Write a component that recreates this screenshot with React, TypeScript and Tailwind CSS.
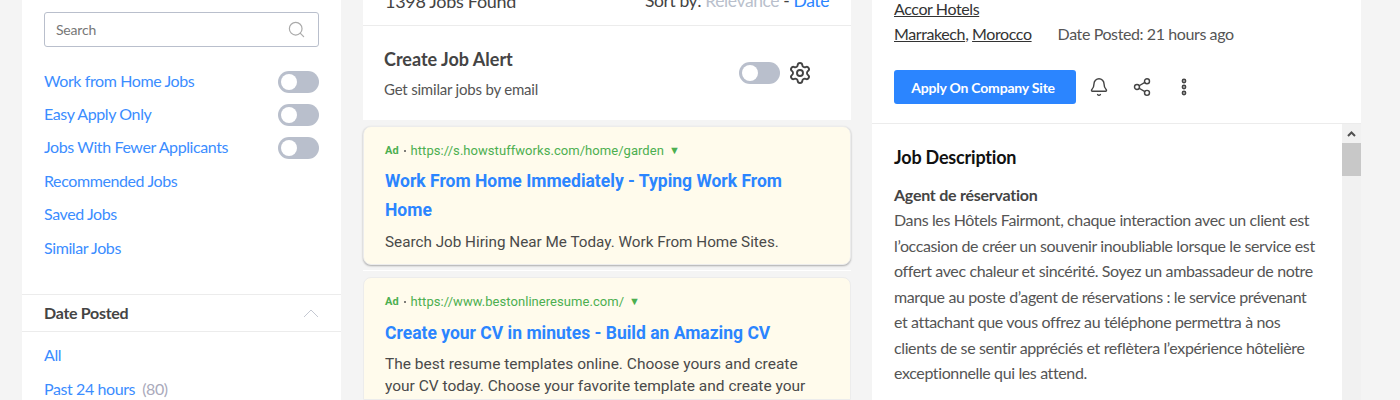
import { Bell, Search, Settings, Share2 } from "lucide-react";

const quickLinks = [
  { label: "Work from Home Jobs", toggle: true },
  { label: "Easy Apply Only", toggle: true },
  { label: "Jobs With Fewer Applicants", toggle: true },
  { label: "Recommended Jobs", toggle: false },
  { label: "Saved Jobs", toggle: false },
  { label: "Similar Jobs", toggle: false },
];

const descLines = [
  "Dans les Hôtels Fairmont, chaque interaction avec un client est",
  "l’occasion de créer un souvenir inoubliable lorsque le service est",
  "offert avec chaleur et sincérité. Soyez un ambassadeur de notre",
  "marque au poste d’agent de réservations : le service prévenant",
  "et attachant que vous offrez au téléphone permettra à nos",
  "clients de se sentir appréciés et reflètera l’expérience hôtelière",
  "exceptionnelle qui les attend.",
];

function Toggle() {
  return (
    <div className="flex h-[22px] w-[41px] shrink-0 items-center rounded-full bg-[#b9bfcc] pl-[3px]">
      <div className="h-[16px] w-[16px] rounded-full bg-white" />
    </div>
  );
}

function AdHead({ url }: { url: string }) {
  return (
    <div className="flex h-[20px] items-center text-[#4caf50]">
      <span className="text-[11px] font-bold">Ad</span>
      <span className="mx-[5px] h-[2px] w-[2px] rounded-full bg-[#555]" />
      <span className="text-[13px] tracking-[0.05px]">{url}</span>
      <span className="ml-[5px] text-[11px]">▼</span>
    </div>
  );
}

export default function App() {
  return (
    <div className="flex h-[400px] w-[1400px] overflow-hidden bg-[#f4f4f4] font-['Lato',sans-serif] text-[#555]">
      {/* filters */}
      <aside className="ml-[22px] flex h-full w-[319px] shrink-0 flex-col bg-white">
        <div className="shrink-0 px-[22px] pt-[12px]">
          <div className="flex h-[35px] items-center justify-between rounded-[3px] border border-[#b9bfcc] pl-[11px] pr-[12px]">
            <span className="text-[14px] tracking-[-0.2px] text-[#777]">Search</span>
            <Search className="h-[19px] w-[19px] text-[#aaa]" strokeWidth={1.5} />
          </div>
          <div className="mt-[17px] flex flex-col">
            {quickLinks.map((item) => (
              <div key={item.label} className="flex h-[33.4px] items-center justify-between text-[16px] tracking-[-0.4px] text-[#3b8dff]">
                <span>{item.label}</span>
                {item.toggle && (
                  <div className="mt-[2px]">
                    <Toggle />
                  </div>
                )}
              </div>
            ))}
          </div>
        </div>
        <div className="mt-[30px] flex h-[38px] shrink-0 items-center justify-between border-y border-[#ececec] px-[22px]">
          <span className="text-[16px] font-bold tracking-[-0.3px] text-[#444]">Date Posted</span>
          <svg width="16" height="10" viewBox="0 0 16 10" fill="none" stroke="#c4c8d2" strokeWidth="1">
            <path d="M1 9 L8 2 L15 9" />
          </svg>
        </div>
        <div className="flex shrink-0 flex-col px-[22px] pt-[6px] text-[16px] tracking-[-0.4px] text-[#3b8dff]">
          <div className="flex h-[34px] items-center">All</div>
          <div className="flex h-[34px] items-center">
            Past 24 hours <span className="ml-[7px] text-[#aab]">(80)</span>
          </div>
        </div>
      </aside>

      {/* results */}
      <main className="ml-[22px] flex w-[488px] shrink-0 flex-col">
        <div className="flex h-[26px] shrink-0 items-end justify-between overflow-hidden border-b border-[#ececec] bg-white px-[22px] pb-[13px] text-[#444]">
          <span className="text-[18px] leading-[22px] tracking-[-0.3px]">1398 Jobs Found</span>
          <span className="text-[17.5px] leading-[22px] tracking-[-0.4px]">
            Sort by: <span className="text-[#b9bfcc]">Relevance</span> - <span className="text-[#2b85ff]">Date</span>
          </span>
        </div>
        <div className="flex h-[94px] shrink-0 items-center justify-between bg-white pl-[21px] pr-[39px]">
          <div>
            <div className="text-[18px] font-bold leading-[24px] text-[#444]">Create Job Alert</div>
            <div className="mt-[8px] text-[15px] leading-[20px] tracking-[-0.2px]">Get similar jobs by email</div>
          </div>
          <div className="flex items-center gap-[8px]">
            <Toggle />
            <Settings className="h-[24px] w-[24px] text-[#444]" strokeWidth={1.9} />
          </div>
        </div>
        <div className="mt-[6px] h-[139px] shrink-0 rounded-[8px] border border-[#ececec] bg-[#fffbec] pl-[21px] pr-[22px] pt-[14px] font-['Roboto',sans-serif] shadow-[0_1px_2px_rgba(0,0,0,0.3)]">
          <AdHead url="https://s.howstuffworks.com/home/garden" />
          <div className="mt-[6px] text-[17.5px] font-bold leading-[29px] text-[#2b85ff]">
            Work From Home Immediately - Typing Work From Home
          </div>
          <div className="mt-[7px] text-[15.25px] leading-[20px] text-[#4a4a4a]">
            Search Job Hiring Near Me Today. Work From Home Sites.
          </div>
        </div>
        <div className="mt-[5px] h-[1px] shrink-0 bg-white" />
        <div className="mt-[6px] flex-1 rounded-t-[8px] border border-[#ececec] bg-[#fffbec] pl-[21px] pr-[22px] pt-[14px] font-['Roboto',sans-serif]">
          <AdHead url="https://www.bestonlineresume.com/" />
          <div className="mt-[7px] text-[17.5px] font-bold leading-[28px] text-[#2b85ff]">
            Create your CV in minutes - Build an Amazing CV
          </div>
          <div className="mt-[6px] text-[15.5px] leading-[22px] text-[#4a4a4a]">
            The best resume templates online. Choose yours and create your CV today. Choose your favorite template and create your
          </div>
        </div>
      </main>

      {/* job detail */}
      <section className="ml-[21px] flex w-[489px] shrink-0 flex-col bg-white">
        <div className="h-[124px] shrink-0 border-b border-[#ececec] px-[22px]">
          <div className="-mt-[1px] text-[16px] leading-[19px] tracking-[-0.4px] text-[#333] underline">Accor Hotels</div>
          <div className="mt-[6px] flex text-[16px] leading-[19px] tracking-[-0.4px]">
            <span className="text-[#333]">
              <span className="underline">Marrakech</span>, <span className="underline">Morocco</span>
            </span>
            <span className="ml-[26px]">Date Posted: 21 hours ago</span>
          </div>
          <div className="mt-[27px] flex items-center">
            <button className="h-[34px] w-[182px] rounded-[3px] bg-[#2b85ff] pr-[4px] text-[14px] font-bold tracking-[-0.2px] text-white">
              Apply On Company Site
            </button>
            <Bell className="ml-[13px] h-[20px] w-[20px] text-[#444]" strokeWidth={1.7} />
            <Share2 className="ml-[23px] h-[20px] w-[20px] text-[#444]" strokeWidth={1.7} />
            <svg className="ml-[29px]" width="6" height="18" viewBox="0 0 6 18" fill="none" stroke="#444" strokeWidth="1.6">
              <circle cx="3" cy="3" r="1.6" />
              <circle cx="3" cy="9" r="1.6" />
              <circle cx="3" cy="15" r="1.6" />
            </svg>
          </div>
        </div>
        <div className="flex min-h-0 flex-1">
          <div className="flex-1 pl-[22px] pt-[20px]">
            <div className="text-[18px] font-bold leading-[26px] tracking-[-0.2px] text-[#111]">Job Description</div>
            <div className="mt-[13px] text-[16px] font-bold leading-[24px] tracking-[-0.25px] text-[#444]">Agent de réservation</div>
            <div className="text-[16px] leading-[25.5px] tracking-[-0.38px]">
              {descLines.map((line) => (
                <div key={line} className="whitespace-nowrap">{line}</div>
              ))}
            </div>
          </div>
          <div className="flex w-[19px] shrink-0 flex-col bg-[#f1f1f1]">
            <div className="flex h-[19px] items-center justify-center">
              <svg width="9" height="6" viewBox="0 0 9 6" fill="none" stroke="#505050" strokeWidth="2">
                <path d="M1 5 L4.5 1.5 L8 5" />
              </svg>
            </div>
            <div className="h-[33px] bg-[#c8c8c8]" />
          </div>
        </div>
      </section>
    </div>
  );
}
